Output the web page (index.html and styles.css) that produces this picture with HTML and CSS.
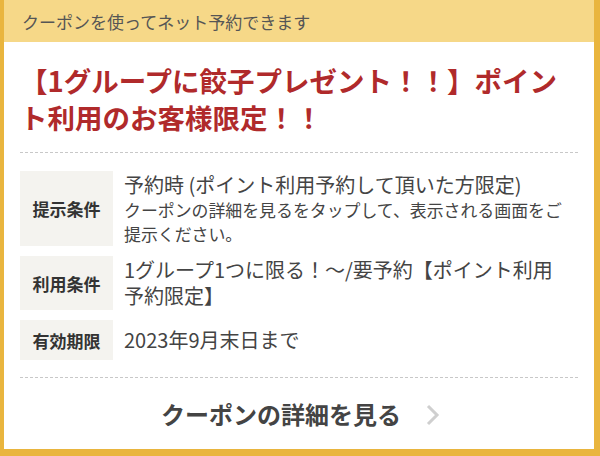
FILE: index.html
```html
<!DOCTYPE html>
<html lang="ja">
<head>
<meta charset="utf-8">
<link rel="stylesheet" href="styles.css">
</head>
<body>
<div class="card">
  <div class="card-head">クーポンを使ってネット予約できます</div>
  <div class="card-body">
    <h1 class="title">【1グループに餃子プレゼント！！】ポイント利用のお客様限定！！</h1>
    <div class="terms">
      <div class="term">
        <div class="term-label">提示条件</div>
        <div class="term-value">
          <div class="main">予約時 (ポイント利用予約して頂いた方限定)</div>
          <div class="sub">クーポンの詳細を見るをタップして、表示される画面をご提示ください。</div>
        </div>
      </div>
      <div class="term">
        <div class="term-label">利用条件</div>
        <div class="term-value">
          <div class="main">1グループ1つに限る！〜/要予約【ポイント利用予約限定】</div>
        </div>
      </div>
      <div class="term">
        <div class="term-label">有効期限</div>
        <div class="term-value">
          <div class="main">2023年9月末日まで</div>
        </div>
      </div>
    </div>
    <div class="more">
      <span class="more-text">クーポンの詳細を見る</span>
      <svg class="chev" width="16" height="22" viewBox="0 0 16 22"><path d="M3 2 L12 11 L3 20" fill="none" stroke="#cfcfcf" stroke-width="3"/></svg>
    </div>
  </div>
</div>
</body>
</html>
```
FILE: styles.css
```css
html, body {
  margin: 0;
  padding: 0;
  background: #ffffff;
}
body {
  font-family: "Noto Sans CJK JP", "Noto Sans", sans-serif;
  color: #444;
}
.card {
  width: 600px;
  height: 456px;
  box-sizing: border-box;
  border-left: 4px solid #e9b53e;
  border-right: 6px solid #e9b53e;
  border-bottom: 7px solid #e9b53e;
  background: #fff;
  display: flex;
  flex-direction: column;
}
.card-head {
  height: 42px;
  background: #f6d888;
  display: flex;
  align-items: center;
  padding-left: 18px;
  font-size: 17px;
  color: #555;
  flex-shrink: 0;
}
.card-body {
  padding: 20px 16px 0 16px;
  flex: 1;
  display: flex;
  flex-direction: column;
}
.title {
  margin: 0;
  padding-right: 16px;
  font-size: 27.5px;
  line-height: 37px;
  font-weight: bold;
  color: #b02a2b;
}
.terms {
  margin-top: 16px;
  border-top: 1px dashed #c8c8c8;
  border-bottom: 1px dashed #c8c8c8;
  padding: 18px 0 17px 0;
  display: flex;
  flex-direction: column;
  gap: 10px;
}
.term {
  display: flex;
  gap: 11px;
  min-height: 40px;
}
.term-label {
  width: 93px;
  flex-shrink: 0;
  background: #f4f3ef;
  display: flex;
  align-items: center;
  justify-content: center;
  font-size: 17px;
  font-weight: bold;
  color: #333;
}
.term-value {
  padding: 1px 10px 1px 0;
  display: flex;
  flex-direction: column;
  justify-content: center;
  flex: 1;
}
.main {
  font-size: 20px;
  line-height: 26px;
  color: #444;
}
.sub {
  font-size: 16.9px;
  line-height: 23.5px;
  color: #444;
}
.more {
  flex: 1;
  display: flex;
  align-items: center;
  justify-content: center;
  gap: 24px;
  padding-left: 4px;
}
.more-text {
  font-size: 24px;
  font-weight: bold;
  color: #444;
}
.chev {
  display: block;
  margin-top: 2px;
}
```
